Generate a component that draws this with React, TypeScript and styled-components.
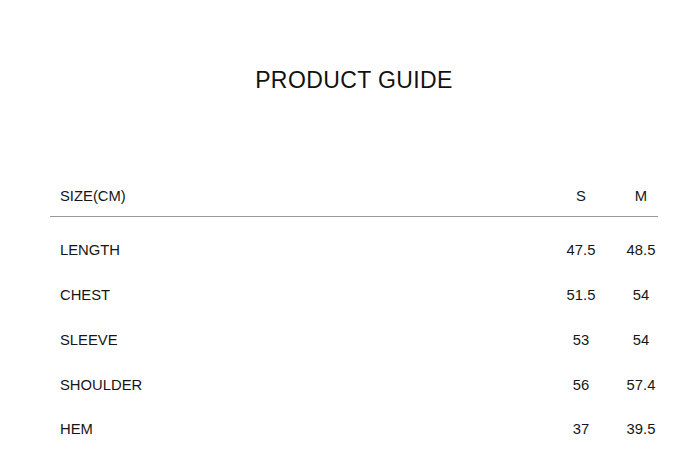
import React from 'react';
import styled, { createGlobalStyle } from 'styled-components';

const GlobalStyle = createGlobalStyle`
  html, body {
    margin: 0;
    padding: 0;
    background: #ffffff;
  }

  body {
    font-family: "Liberation Sans", Arial, Helvetica, sans-serif;
    color: #1a1a1a;
  }
`;

const sizes = [
  { name: 'LENGTH', s: '47.5', m: '48.5' },
  { name: 'CHEST', s: '51.5', m: '54' },
  { name: 'SLEEVE', s: '53', m: '54' },
  { name: 'SHOULDER', s: '56', m: '57.4' },
  { name: 'HEM', s: '37', m: '39.5' },
];

const Page = styled.div`
  width: 685px;
  padding: 68px 27px 0 50px;
  box-sizing: border-box;
`;

const Title = styled.h1`
  margin: 0;
  font-size: 23px;
  line-height: 24px;
  font-weight: 400;
  text-align: center;
  letter-spacing: 0.4px;
  color: #111;
`;

const Table = styled.div`
  margin-top: 84px;
  width: 608px;
`;

const Row = styled.div<{ $head?: boolean }>`
  display: grid;
  grid-template-columns: 1fr 34px 34px;
  column-gap: 26px;
  align-items: center;
  padding-left: 10px;
  height: ${({ $head }) => ($head ? '40px' : '44.75px')};
  font-size: 14.8px;
  color: #161616;
  border-bottom: ${({ $head }) => ($head ? '1px solid #9a9a9a' : 'none')};
  margin-bottom: ${({ $head }) => ($head ? '11px' : '0')};
`;

const Cell = styled.span<{ $center?: boolean }>`
  text-align: ${({ $center }) => ($center ? 'center' : 'left')};
  white-space: nowrap;
`;

export default function App() {
  return (
    <>
      <GlobalStyle />
      <Page>
        <Title>PRODUCT GUIDE</Title>
        <Table>
          <Row $head>
            <Cell>SIZE(CM)</Cell>
            <Cell $center>S</Cell>
            <Cell $center>M</Cell>
          </Row>
          {sizes.map((row) => (
            <Row key={row.name}>
              <Cell>{row.name}</Cell>
              <Cell $center>{row.s}</Cell>
              <Cell $center>{row.m}</Cell>
            </Row>
          ))}
        </Table>
      </Page>
    </>
  );
}
